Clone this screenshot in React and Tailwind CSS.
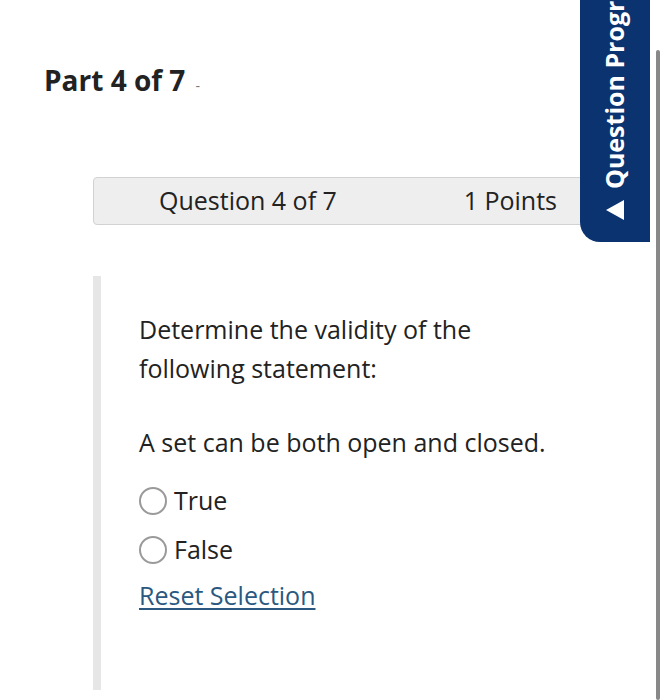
export default function App() {
  return (
    <div className="relative w-[668px] h-[700px] overflow-hidden bg-white font-['Open_Sans',sans-serif] text-[#222]">
      <div className="pl-[44px] pt-[62px]">
        <h1 className="flex items-baseline text-[28px] leading-[36px] font-bold text-[#222]">
          Part 4 of 7
          <span className="ml-[10px] text-[14px] font-normal text-[#777]">-</span>
        </h1>

        <div className="mt-[73px] ml-[49px] w-[500px] h-[48px] flex items-center rounded-[4px] border border-[#d2d2d2] bg-[#eeeeee] text-[25px]">
          <span className="ml-[65px]">Question 4 of 7</span>
          <span className="ml-auto mr-[35px]">1 Points</span>
        </div>

        <div className="mt-[51px] ml-[49px] flex h-[414px]">
          <div className="w-[8px] bg-[#e6e6e6]" />
          <div className="pl-[38px] pt-[34px] text-[25px] leading-[39px]">
            <p>
              Determine the validity of the
              <br />
              following statement:
            </p>
            <p className="mt-[35px]">A set can be both open and closed.</p>
            <div className="mt-[19px] flex flex-col gap-[10px]">
              <label className="flex items-center gap-[7px]">
                <span className="w-[28px] h-[28px] rounded-full border-2 border-[#9a9a9a] bg-white" />
                True
              </label>
              <label className="flex items-center gap-[7px]">
                <span className="w-[28px] h-[28px] rounded-full border-2 border-[#9a9a9a] bg-white" />
                False
              </label>
            </div>
            <a className="mt-[7px] block underline underline-offset-[3px] text-[#2a5880]">Reset Selection</a>
          </div>
        </div>
      </div>

      <div className="absolute left-[580px] top-0 w-[70px] h-[242px] rounded-bl-[20px] bg-[#0a3370] overflow-hidden">
        <div className="absolute left-0 top-[242px] w-[242px] h-[70px] origin-top-left -rotate-90 flex items-center pl-[22px] gap-[11px] whitespace-nowrap text-white text-[25px] font-bold">
          <svg width="20" height="18" viewBox="0 0 20 18" className="shrink-0">
            <path d="M10 0 L20 18 L0 18 Z" fill="white" />
          </svg>
          <span>Question Progress</span>
        </div>
      </div>

      <div className="absolute left-[656px] top-[50px] w-[4px] h-[650px] rounded-full bg-[#888]" />
    </div>
  );
}
